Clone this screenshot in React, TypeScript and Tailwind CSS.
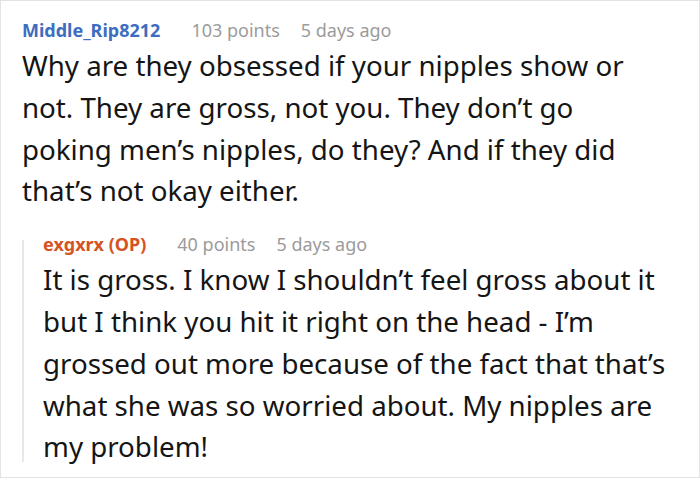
type Comment = {
    author: string;
    authorColor: string;
    points: string;
    age: string;
    lines: string[];
};

const PARENT: Comment = {
    author: "Middle_Rip8212",
    authorColor: "text-[#3d6dbf]",
    points: "103 points",
    age: "5 days ago",
    lines: [
        "Why are they obsessed if your nipples show or",
        "not. They are gross, not you. They don’t go",
        "poking men’s nipples, do they? And if they did",
        "that’s not okay either.",
    ],
};

const REPLY: Comment = {
    author: "exgxrx (OP)",
    authorColor: "text-[#d5531f]",
    points: "40 points",
    age: "5 days ago",
    lines: [
        "It is gross. I know I shouldn’t feel gross about it",
        "but I think you hit it right on the head - I’m",
        "grossed out more because of the fact that that’s",
        "what she was so worried about. My nipples are",
        "my problem!",
    ],
};

function CommentHeader({ c }: { c: Comment }) {
    return (
        <div className="flex items-baseline text-[18px] leading-[24px]">
            <span className={`font-bold ${c.authorColor}`}>{c.author}</span>
            <span className="ml-[31px] text-[#9b9b9b]">{c.points}</span>
            <span className="ml-[21px] text-[#9b9b9b]">{c.age}</span>
        </div>
    );
}

// lines are kept as in the screenshot so the wraps match
function CommentBody({ lines }: { lines: string[] }) {
    return (
        <div className="mt-[3px] text-[27.7px] leading-[41.8px] text-[#151515]">
            {lines.map((l, i) => (
                <div key={i} className="whitespace-nowrap">
                    {l}
                </div>
            ))}
        </div>
    );
}

export default function App() {
    return (
        <div className="w-[700px] h-[478px] bg-white border border-[#e3e3e3] overflow-hidden font-['Noto_Sans','Open_Sans',sans-serif]">
            <div className="pl-[21px] pt-[17px]">
                <CommentHeader c={PARENT} />
                <CommentBody lines={PARENT.lines} />

                {/* reply */}
                <div className="flex mt-[20px]">
                    <div className="w-[2px] bg-[#e8e8e8] mt-[8px] mb-[6px]" />
                    <div className="pl-[19px]">
                        <CommentHeader c={REPLY} />
                        <CommentBody lines={REPLY.lines} />
                    </div>
                </div>
            </div>
        </div>
    );
}
